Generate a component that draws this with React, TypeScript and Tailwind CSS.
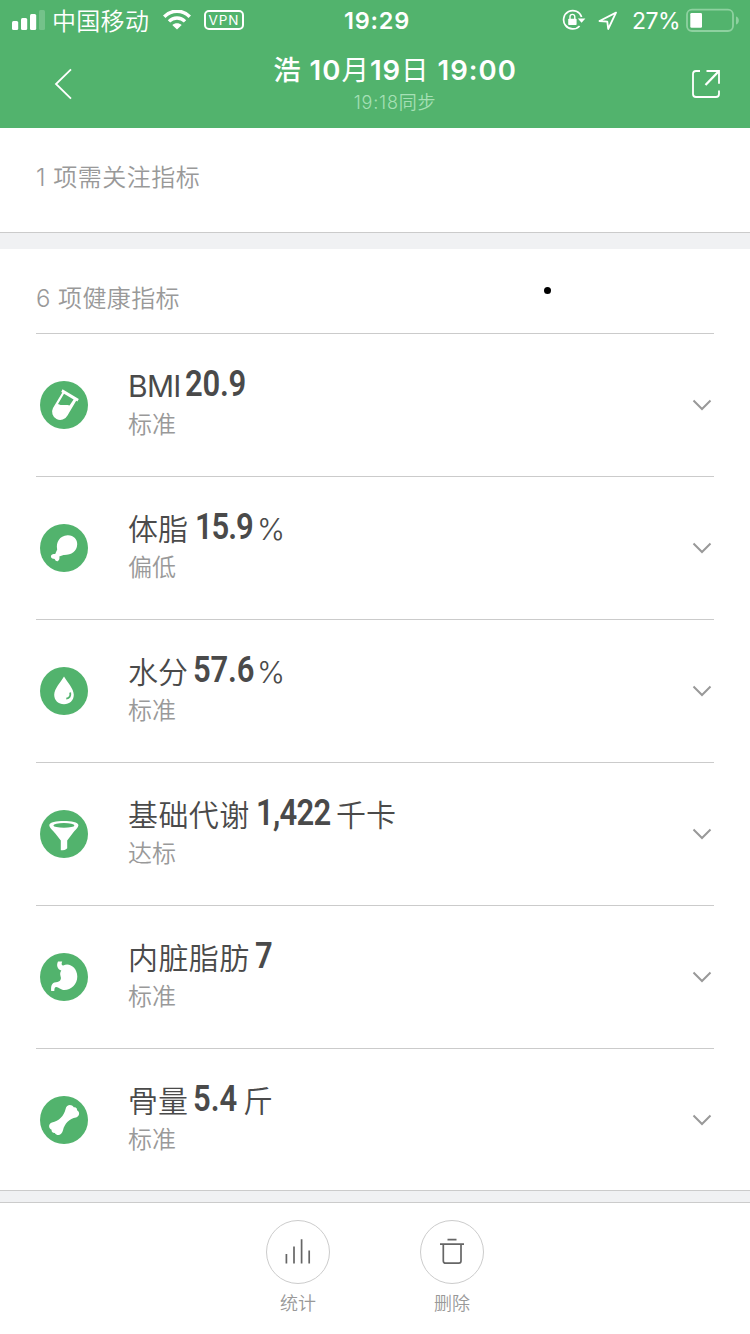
import React from "react";

interface Metric {
  name: string;
  value: string;
  unit?: string;
  status: string;
  nameClass: string; // width of the name box
  valueClass: string; // width of the value box
  icon: React.ReactNode;
}

const GREEN = "#52b36d";

const metrics: Metric[] = [
  {
    name: "BMI",
    value: "20.9",
    status: "标准",
    nameClass: "w-[57px] font-normal tracking-[-0.7px]",
    valueClass: "w-[64px] tracking-[-0.3px]",
    icon: (
      <>
        <path d="M22.5 8.3 L38.8 18 L37.4 20.4 L36.2 19.8 L27.5 34.5 A8 8 0 0 1 13 27 L22.3 11.6 L21.2 10.9 Z" />
        <path d="M24 12.8 L33.6 18.5 L29.5 24.6 C25.5 23 22.5 25.3 18 22.9 Z" fill={GREEN} />
      </>
    ),
  },
  {
    name: "体脂",
    value: "15.9",
    unit: "%",
    status: "偏低",
    nameClass: "w-[67px]",
    valueClass: "w-[62px] tracking-[-1.3px]",
    icon: (
      <path d="M27.5 11.3 C33.5 11 37.6 15.5 37.2 20.5 C36.8 27.5 31.5 31.2 23.5 31 L19.3 32.4 C20 35 18.6 37.8 16.2 37 C15 36.4 15.2 34.9 13.8 34.7 C11 34.6 10.3 32.2 11.5 30.9 C12.6 29.9 14.2 29.8 15.2 30 L17.2 25.5 C15.8 18.5 19.5 11.8 27.5 11.3 Z" />
    ),
  },
  {
    name: "水分",
    value: "57.6",
    unit: "%",
    status: "标准",
    nameClass: "w-[65px]",
    valueClass: "w-[64px] tracking-[-0.2px]",
    icon: (
      <>
        <path d="M24 9.5 C27 15 33.8 21.5 33.8 27.8 C33.8 33.5 29.5 37.3 24 37.3 C18.5 37.3 14.2 33.5 14.2 27.8 C14.2 21.5 21 15 24 9.5 Z" />
        <path d="M30.2 25.5 C30.8 29 29.5 31.3 26.3 31.7" fill="none" stroke={GREEN} strokeWidth="1.8" />
      </>
    ),
  },
  {
    name: "基础代谢",
    value: "1,422",
    unit: "千卡",
    status: "达标",
    nameClass: "w-[128px] tracking-[0.4px]",
    valueClass: "w-[80px] tracking-[-0.9px]",
    icon: (
      <>
        <path d="M9.3 15 C9.3 9.5 38.4 9.5 38.4 15 C38.4 18 35 20 32.5 23.5 L27.2 30.6 V38.2 C26 39.8 23.5 40.3 20.8 40.3 V30.6 L15.3 23.5 C12.5 20 9.3 18 9.3 15 Z" />
        <ellipse cx="23.9" cy="15.4" rx="10.5" ry="2.4" fill={GREEN} />
      </>
    ),
  },
  {
    name: "内脏脂肪",
    value: "7",
    status: "标准",
    nameClass: "w-[127px] tracking-[0.4px]",
    valueClass: "w-[20px]",
    icon: (
      <path d="M18 8.4 L22.2 8.4 C21.2 10.5 21.4 12.4 23.3 12.6 C29 9 37.3 14.5 37.3 23.5 C37.3 31.5 31 37 24.5 37 C20.5 37 18.5 33.8 16 34 C14.3 34.2 14.5 36.5 14.3 38 H11.2 C10.8 33.5 11.5 29.5 16 29.2 C20.3 29 21.6 26 20.6 23.5 C19.8 21 20.2 19 21.3 17.6 C17.6 16.2 16 12.5 18 8.4 Z" />
    ),
  },
  {
    name: "骨量",
    value: "5.4",
    unit: "斤",
    status: "标准",
    nameClass: "w-[65px]",
    valueClass: "w-[50px]",
    icon: (
      <path d="M25.6 13 C26.4 8.6 31.5 7.8 33.8 11.3 C36.3 11 37.2 12.6 37 14.2 C40.3 16 39.6 20.3 36 21.4 C29.5 22.5 24.5 27.5 23 34.2 C21.8 39.6 17 40.2 14.8 36.9 C12.3 36.9 11.3 35.4 11.6 33.7 C8 31.8 8.6 27.5 12 26.4 C19 25 24 20 25.6 13 Z" />
    ),
  },
];

const StatusBar: React.FC = () => (
  <div className="flex h-10 items-center text-white">
    <svg className="ml-3 h-5 w-[33px]" viewBox="0 0 33 20" fill="currentColor">
      <rect x="0" y="11" width="6.2" height="9" rx="1.5" />
      <rect x="9" y="8" width="6.2" height="12" rx="1.5" />
      <rect x="18" y="4" width="6.2" height="16" rx="1.5" />
      <rect x="27" y="0" width="6" height="20" rx="1.5" opacity="0.2" />
    </svg>
    <span className="ml-[7px] w-[98px] pt-[3px] text-[24px] leading-10 font-[350] tracking-[0.3px] whitespace-nowrap">
      中国移动
    </span>
    <svg className="ml-[13px] h-5 w-7" viewBox="0 0 28 20" fill="none" stroke="currentColor">
      <path d="M1.2 6.8 C8.5 -0.6 19.5 -0.6 26.8 6.8" strokeWidth="3.6" />
      <path d="M6 11.4 C10.5 6.9 17.5 6.9 22 11.4" strokeWidth="3.4" />
      <path d="M14 19.6 L9.3 15 C12 12.7 16 12.7 18.7 15 Z" fill="currentColor" stroke="none" />
    </svg>
    <span className="ml-[13px] flex h-5 w-10 items-center justify-center rounded-[5px] border-2 border-white pt-px text-[13.5px] leading-none tracking-[0.9px]">
      VPN
    </span>
    <span className="ml-[100px] w-[68px] pt-[2px] text-[23.5px] leading-10 font-semibold tracking-[0.8px] whitespace-nowrap">
      19:29
    </span>
    {/* rotation lock */}
    <svg className="ml-[150px] h-[22px] w-6" viewBox="0 0 24 22" fill="none" stroke="currentColor">
      <path d="M19.6 8 A9.2 9.2 0 1 0 17.6 17" strokeWidth="1.7" />
      <path d="M15.8 9.4 H23.4 L19.6 13.8 Z" fill="currentColor" stroke="none" />
      <rect x="6.2" y="9.8" width="8.4" height="6.2" rx="0.8" fill="currentColor" stroke="none" />
      <path d="M8 10 V7.8 A2.4 2.4 0 0 1 12.8 7.8 V10" strokeWidth="1.4" />
    </svg>
    <svg className="ml-3 h-5 w-5" viewBox="0 0 20 20" fill="none" stroke="currentColor" strokeWidth="1.8" strokeLinejoin="round">
      <path d="M18 2.6 L1.5 11 L9.3 11.6 L10.2 19 Z" />
    </svg>
    <span className="ml-[14px] w-[50px] pt-[2px] text-[23px] leading-10 tracking-[-0.5px] whitespace-nowrap">27%</span>
    <svg className="ml-1 h-6 w-[54px]" viewBox="0 0 54 24">
      <rect x="1" y="1.6" width="46" height="21.4" rx="5" fill="none" stroke="#8ed1a0" strokeWidth="1.8" />
      <rect x="4.3" y="5" width="11.7" height="14.8" rx="1.2" fill="white" />
      <path d="M50 8.5 C53.8 9.5 53.8 15.5 50 16.5 Z" fill="#8ed1a0" />
    </svg>
  </div>
);

const NavBar: React.FC = () => (
  <div className="flex h-[88px] text-white">
    <button className="w-[108px] pl-[54px]">
      <svg className="h-8 w-[18px]" viewBox="0 0 18 32" fill="none" stroke="currentColor" strokeWidth="1.8">
        <path d="M17 1.4 L2 16 L17 30.6" />
      </svg>
    </button>
    <div className="flex flex-1 flex-col items-center pt-3">
      <h1 className="text-[27.5px] leading-9 font-semibold tracking-[1px] whitespace-nowrap">
        <span className="font-medium">浩</span> 10<span className="font-normal">月</span>19
        <span className="font-normal">日</span> 19:00
      </h1>
      <p className="pt-px text-[18px] leading-[28px] font-[350] tracking-[0.8px] whitespace-nowrap text-[#a6e0b6]">
        19:18同步
      </p>
    </div>
    <button className="w-[68px] pl-[10px]">
      <svg className="h-7 w-7" viewBox="0 0 28 28" fill="none" stroke="currentColor" strokeWidth="1.8">
        <path d="M8 1 H4 A3 3 0 0 0 1 4 V24 A3 3 0 0 0 4 27 H24 A3 3 0 0 0 27 24 V20.5" />
        <path d="M14.5 1 H27 V13.8" />
        <path d="M13.5 15 L26.5 1.5" strokeWidth="2.3" />
      </svg>
    </button>
  </div>
);

const MetricRow: React.FC<{ metric: Metric }> = ({ metric }) => (
  <li className="flex h-[143px] items-center border-t border-[#cbcbcb] pl-1">
    <svg className="size-12 shrink-0" viewBox="0 0 48 48" fill="white">
      <circle cx="24" cy="24" r="24" fill={GREEN} />
      {metric.icon}
    </svg>
    <div className="ml-10 flex-1 pb-[3px]">
      <div className="mb-[2px] flex h-10 items-baseline text-[30px] leading-10 font-[350] whitespace-nowrap text-[#4a4a4a]">
        <span className={metric.nameClass}>{metric.name}</span>
        <span className={metric.valueClass}>
          <span className="inline-block origin-left -translate-y-px scale-x-[0.85] font-[Roboto] text-[36.5px] font-semibold">
            {metric.value}
          </span>
        </span>
        {metric.unit && <span>{metric.unit}</span>}
      </div>
      <p className="text-[24px] leading-9 font-[350] text-[#999]">{metric.status}</p>
    </div>
    <svg className="mr-[2px] h-3 w-5" viewBox="0 0 20 12" fill="none" stroke="#999" strokeWidth="2">
      <path d="M1.5 1.5 L10 10 L18.5 1.5" />
    </svg>
  </li>
);

const ActionButton: React.FC<{ label: string; children: React.ReactNode }> = ({ label, children }) => (
  <button className="flex w-16 flex-col items-center">
    <span className="flex size-16 items-center justify-center rounded-full border border-[#ccc]">
      <svg className="size-8" viewBox="0 0 32 32" fill="none" stroke="#666" strokeWidth="1.7">
        {children}
      </svg>
    </span>
    <span className="mt-[6px] text-[18px] leading-7 font-[350] text-[#999]">{label}</span>
  </button>
);

const App: React.FC = () => {
  return (
    <div className="relative flex h-[1334px] w-[750px] flex-col overflow-hidden bg-white font-[Inter,'Noto_Sans_CJK_SC',sans-serif]">
      <header className="h-32 bg-[#52b36d]">
        <StatusBar />
        <NavBar />
      </header>

      <section className="h-[105px] border-b border-[#cbcbcb] px-9 pt-8">
        <h2 className="text-[24px] leading-9 font-[350] tracking-[0.5px] text-[#999]">1 项需关注指标</h2>
      </section>
      <div className="h-4 bg-[#f0f1f3]" />

      <section className="h-[942px] border-b border-[#cbcbcb] px-9">
        <h2 className="h-[84px] pt-8 text-[24px] leading-9 font-[350] tracking-[0.4px] text-[#999]">
          6 项健康指标
        </h2>
        <ul>
          {metrics.map((metric) => (
            <MetricRow key={metric.name} metric={metric} />
          ))}
        </ul>
      </section>
      <div className="h-[11px] bg-[#f0f1f3]" />

      <footer className="flex flex-1 justify-center gap-[90px] border-t border-[#cbcbcb] pt-[17px]">
        <ActionButton label="统计">
          <path d="M4.4 18 V27.5 M12 10.5 V27.5 M19.6 3.3 V27.5 M27.2 14.5 V27.5" />
        </ActionButton>
        <ActionButton label="删除">
          <path d="M11.5 3.7 H20.5 M4 8.2 H28" />
          <path d="M7.3 8.2 V25 A2.2 2.2 0 0 0 9.5 27.2 H22.8 A2.2 2.2 0 0 0 25 25 V8.2" />
        </ActionButton>
      </footer>

      {/* floating touch dot */}
      <span className="absolute top-[286.5px] left-[543.5px] size-[7px] rounded-full bg-black" />
    </div>
  );
};

export default App;
